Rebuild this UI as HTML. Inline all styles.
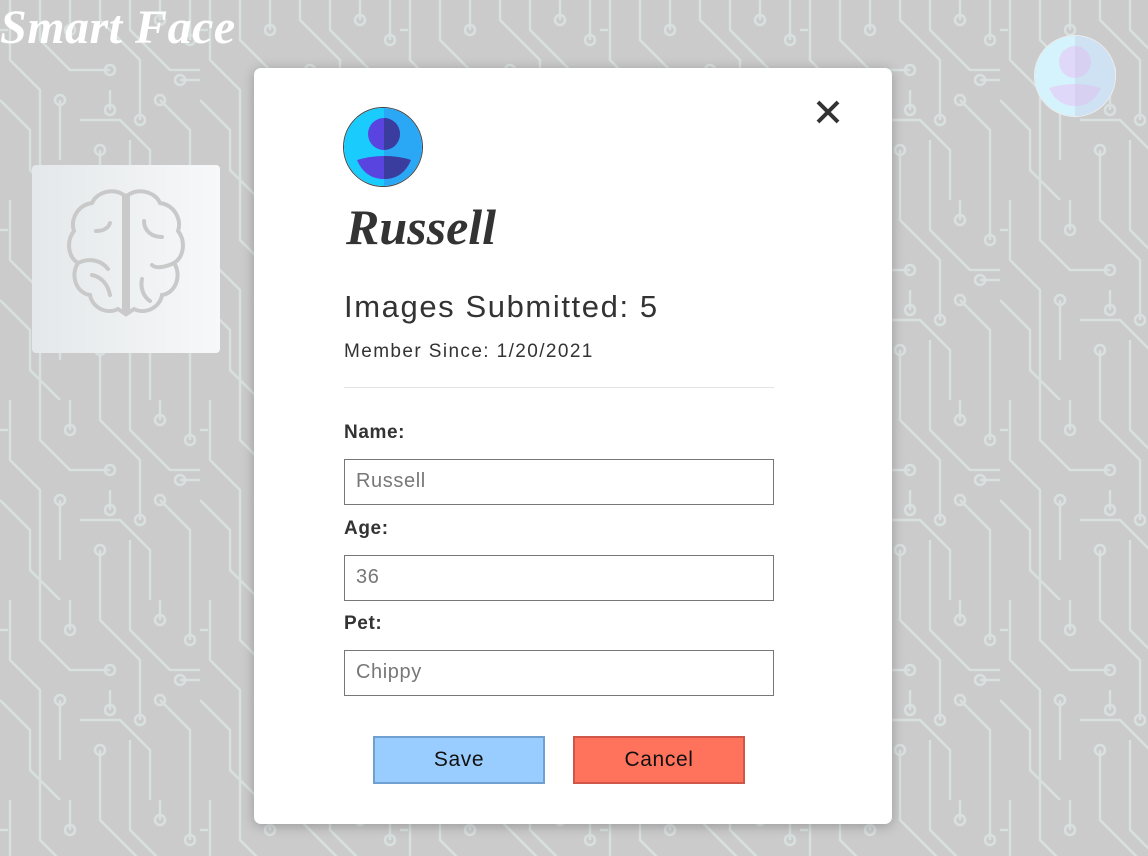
<!DOCTYPE html>
<html><head><meta charset="utf-8">
<style>
html,body{margin:0;padding:0}
body{width:1148px;height:856px;overflow:hidden;position:relative;background:#cbcbcb;font-family:"Liberation Sans",sans-serif}
.bg{position:absolute;inset:0}
.logo{position:absolute;left:0;top:0px;font-family:"Liberation Serif",serif;font-style:italic;font-weight:bold;font-size:48px;color:#fff;letter-spacing:0.5px}
.brainbox{position:absolute;left:32px;top:165px;width:188px;height:188px;border-radius:4px;background:linear-gradient(90deg,#e4e8ea,#f7f8f9)}
.topav{position:absolute;left:1034px;top:35px;width:80px;height:80px;border-radius:50%;border:1px solid #eee;overflow:hidden}
.modal{position:absolute;left:254px;top:68px;width:638px;height:756px;background:#fff;border-radius:7px;box-shadow:0 2px 12px rgba(0,0,0,.25)}
.av{position:absolute;left:89px;top:39px;width:80px;height:80px;border-radius:50%;border:1px solid #444;overflow:hidden;box-sizing:border-box}
.close{position:absolute;left:560px;top:30px}
.name{position:absolute;left:92px;top:130px;font-family:"Liberation Serif",serif;font-style:italic;font-weight:bold;font-size:50px;color:#333}
.h{position:absolute;left:90px;top:221px;font-size:31px;color:#333;letter-spacing:1.6px}
.ms{position:absolute;left:90px;top:273px;font-size:19px;color:#333;letter-spacing:1.4px}
.hr{position:absolute;left:90px;top:319px;width:430px;height:1px;background:#e4e4e4}
.lbl{position:absolute;left:90px;font-size:19px;font-weight:bold;color:#333;letter-spacing:0.6px}
.inp{position:absolute;left:90px;width:430px;height:46px;box-sizing:border-box;border:1px solid #777;font-size:20px;color:#777;padding:10px 11px;letter-spacing:0.6px}
.btn{position:absolute;top:668px;width:172px;height:48px;box-sizing:border-box;border:2px solid;font-size:21px;text-align:center;line-height:44px;color:#111;letter-spacing:0.6px}
</style></head><body>
<svg class="bg" width="1148" height="856">
<defs><pattern id="p" width="200" height="200" patternUnits="userSpaceOnUse">
<g fill="none" stroke="#d9e0e0" stroke-width="2.5">
<path d="M10 0V60L40 90V200M40 0V40L70 70H110M70 0V30M100 0V20L140 60V120M130 0V30L170 70H200M160 0V20M190 0V40M0 100L30 130V170L60 200M60 100V160M80 120H120L150 150V200M100 150V200M130 140V200M160 100L190 130V200M180 80H200M0 30H8M110 90V110"/>
<circle cx="70" cy="30" r="5"/><circle cx="160" cy="20" r="5"/><circle cx="110" cy="70" r="5"/><circle cx="60" cy="100" r="5"/><circle cx="140" cy="120" r="5"/><circle cx="100" cy="150" r="5"/><circle cx="180" cy="80" r="5"/><circle cx="190" cy="40" r="5"/><circle cx="110" cy="110" r="5"/><circle cx="160" cy="100" r="5"/>
</g></pattern></defs>
<rect width="1148" height="856" fill="url(#p)"/>
</svg>
<div class="logo">Smart Face</div>
<div class="brainbox"><svg width="188" height="188" viewBox="0 0 188 188"><g fill="none" stroke="#c9c9c9" stroke-width="4" stroke-linecap="round">
<path d="M92 30C80 22 64 28 60 38C46 40 38 54 42 66C34 76 36 92 46 98C38 110 44 128 58 130C60 142 74 150 86 144L92 148V30Z"/>
<path d="M96 30C108 22 124 28 128 38C142 40 150 54 146 66C154 76 152 92 142 98C150 110 144 128 130 130C128 142 114 150 102 144L96 148V30Z"/>
<path d="M78 58C76 64 70 66 64 66M112 56C112 66 120 72 130 72M46 98C58 92 70 96 76 104M142 98C134 102 124 104 120 100M60 110C70 112 76 120 78 130M110 114C108 124 112 132 118 136"/></g></svg></div>
<div class="topav"><svg width="80" height="80"><rect width="40" height="80" fill="#d4f3fd"/><rect x="40" width="40" height="80" fill="#d6ecfb"/><circle cx="40" cy="26" r="16" fill="#e0d8f8"/><path d="M14 52Q40 44 66 52Q58 70 40 70Q22 70 14 52Z" fill="#e0d8f8"/><rect x="40" width="40" height="80" fill="rgba(120,120,170,.08)"/></svg></div>
<div class="modal">
<div class="av"><svg width="80" height="80" viewBox="0 0 80 80"><rect width="40" height="80" fill="#19ccfd"/><rect x="40" width="40" height="80" fill="#2aa8f6"/><circle cx="40" cy="26" r="16" fill="#5a44e0"/><path d="M13 52Q40 44 67 52Q59 71 40 71Q21 71 13 52Z" fill="#5a44e0"/><path d="M40 10A16 16 0 0 1 40 42Z M40 48Q55 48 67 52Q59 71 40 71Z" fill="#3b3d9e"/></svg></div>
<svg class="close" width="28" height="28"><path d="M4 4L24 24M24 4L4 24" stroke="#333" stroke-width="4"/></svg>
<div class="name">Russell</div>
<div class="h">Images Submitted: 5</div>
<div class="ms">Member Since: 1/20/2021</div>
<div class="hr"></div>
<div class="lbl" style="top:354px">Name:</div>
<div class="inp" style="top:391px">Russell</div>
<div class="lbl" style="top:450px">Age:</div>
<div class="inp" style="top:487px">36</div>
<div class="lbl" style="top:545px">Pet:</div>
<div class="inp" style="top:582px">Chippy</div>
<div class="btn" style="left:119px;background:#99ccff;border-color:#6fa0cf">Save</div>
<div class="btn" style="left:319px;background:#ff725b;border-color:#d0564a">Cancel</div>
</div>
</body></html>
